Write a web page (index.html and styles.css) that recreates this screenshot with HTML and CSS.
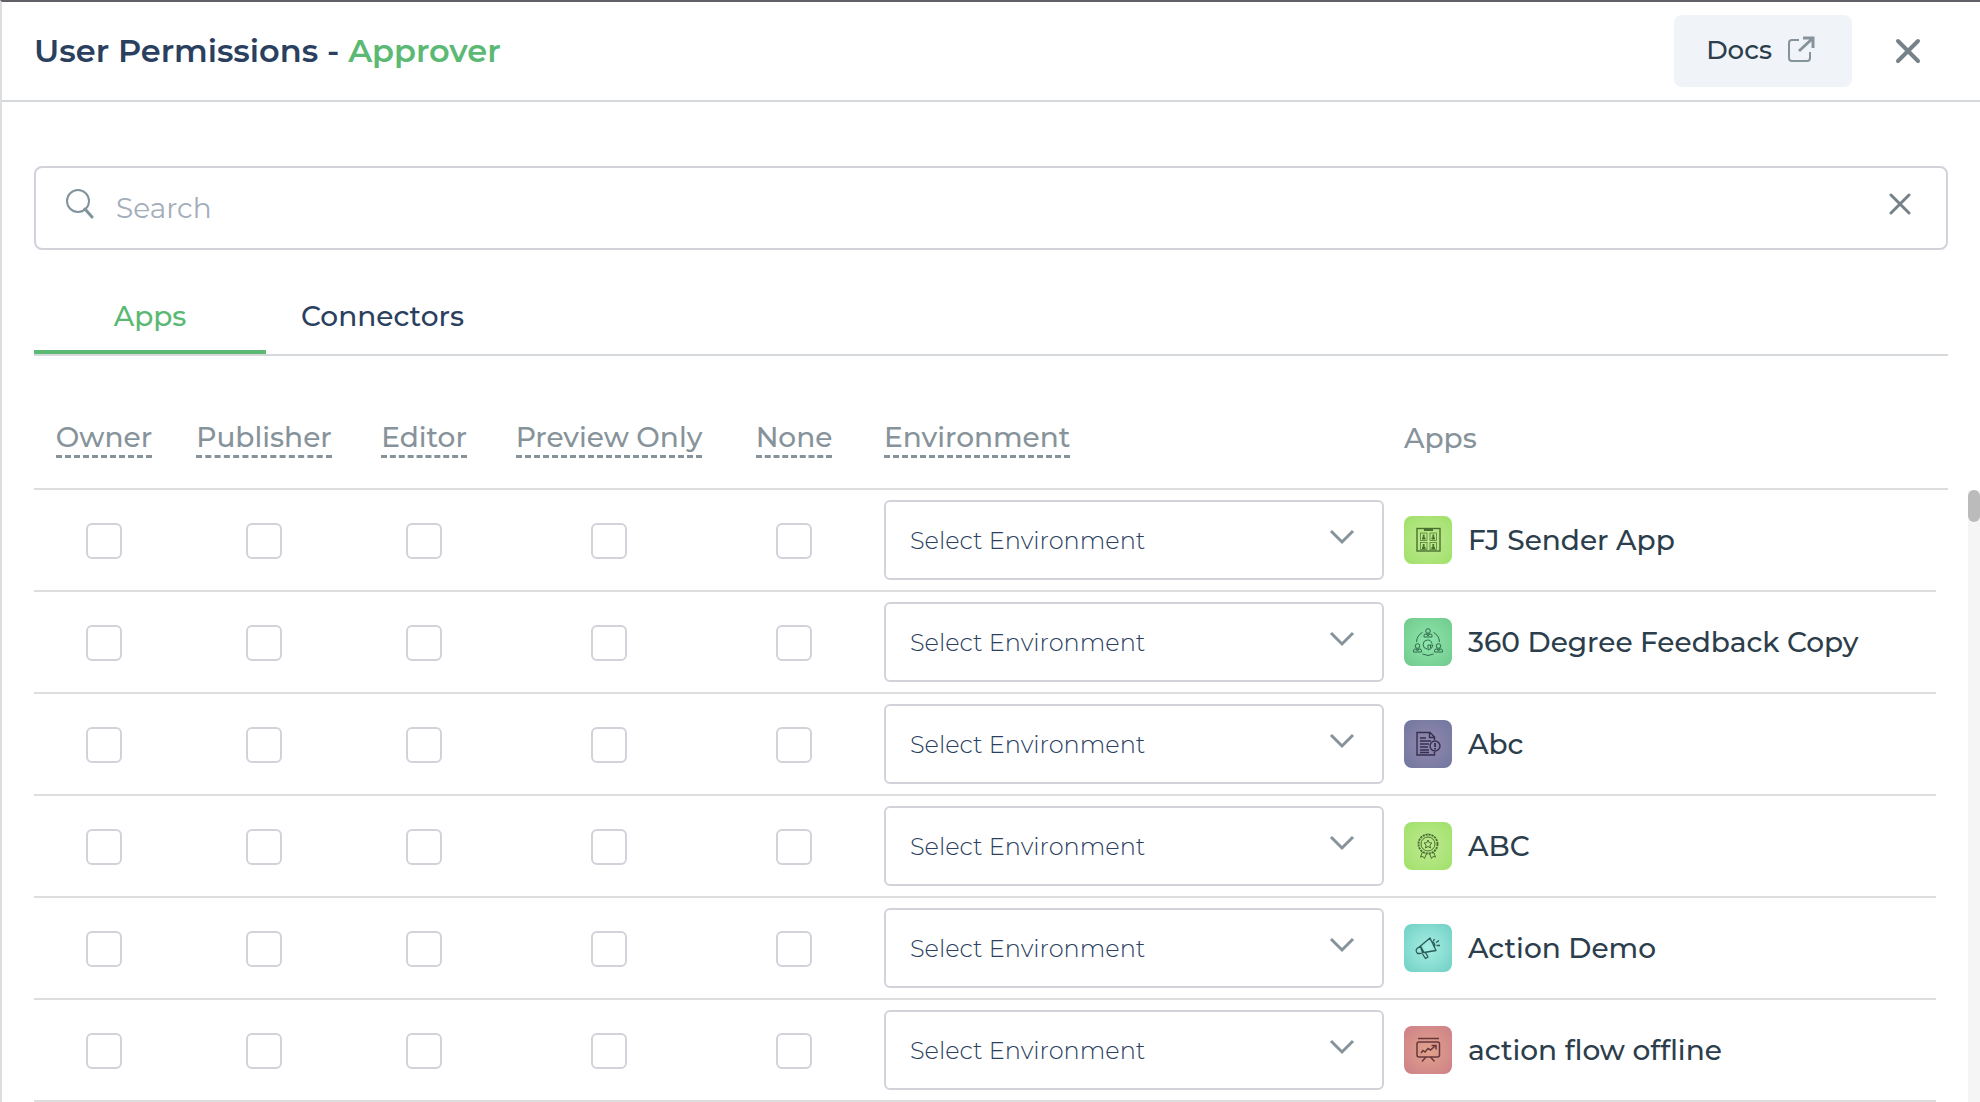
FILE: index.html
```html
<!DOCTYPE html>
<html lang="en">
<head>
<meta charset="utf-8">
<title>User Permissions</title>
<link rel="stylesheet" href="styles.css">
</head>
<body>
<main class="panel">
  <header class="panel-header">
    <h1 class="title">User Permissions - <span class="accent">Approver</span></h1>
    <a class="docs" href="#docs">Docs
      <svg width="28" height="28" viewBox="0 0 28 28" fill="none" stroke="#87939a" stroke-width="2"><path d="M12 4H5Q2 4 2 7V22Q2 25 5 25H20Q23 25 23 22V16"/><path d="M12 15L25 3M16 2H26V12" stroke-width="3"/></svg>
    </a>
    <button class="icon-button" type="button" aria-label="Close">
      <svg width="26" height="26" viewBox="0 0 26 26" fill="none" stroke="#75828a" stroke-width="4" stroke-linecap="round"><path d="M3 3L23 23M23 3L3 23"/></svg>
    </button>
  </header>

  <div class="search">
    <svg width="28" height="30" viewBox="0 0 28 30" fill="none" stroke="#80929a" stroke-width="2"><circle cx="12" cy="12" r="11"/><path d="M19 20L26 28" stroke-width="3" stroke-linecap="round"/></svg>
    <input class="search-input" type="text" placeholder="Search" aria-label="Search">
    <button class="icon-button" type="button" aria-label="Clear search">
      <svg width="22" height="22" viewBox="0 0 22 22" fill="none" stroke="#75828a" stroke-width="3" stroke-linecap="round"><path d="M2 2L20 20M20 2L2 20"/></svg>
    </button>
  </div>

  <nav class="tabs">
    <a class="tab tab-active" href="#apps">Apps</a>
    <a class="tab" href="#connectors">Connectors</a>
  </nav>

  <div class="list">
    <table class="table">
      <thead>
        <tr class="head-row">
          <th><span class="hint">Owner</span></th>
          <th><span class="hint">Publisher</span></th>
          <th><span class="hint">Editor</span></th>
          <th><span class="hint">Preview Only</span></th>
          <th><span class="hint">None</span></th>
          <th class="env"><span class="hint">Environment</span></th>
          <th class="app">Apps</th>
        </tr>
      </thead>
      <tbody>
        <tr class="row">
          <td><input class="check" type="checkbox" aria-label="Owner"></td>
          <td><input class="check" type="checkbox" aria-label="Publisher"></td>
          <td><input class="check" type="checkbox" aria-label="Editor"></td>
          <td><input class="check" type="checkbox" aria-label="Preview Only"></td>
          <td><input class="check" type="checkbox" aria-label="None"></td>
          <td class="env"><div class="select-box"><select class="select" aria-label="Environment"><option>Select Environment</option></select><svg class="chevron" width="26" height="16" viewBox="0 0 26 16"><path d="M2 2L13 13L24 2"/></svg></div></td>
          <td class="app"><svg class="app-icon lime" viewBox="0 0 48 48"><rect x="13" y="12.500" width="23" height="22.500" stroke-width="1.400"/><path d="M20 14H29" stroke-width="2"/><g stroke-width="0.700"><rect x="16.500" y="17" width="6.500" height="7.500"/><rect x="26" y="17" width="6.500" height="7.500"/><rect x="16.500" y="26.500" width="6.500" height="7"/><rect x="26" y="26.500" width="6.500" height="7"/></g><path stroke-width="1.800" d="M19.700 18.500V22.500M29.300 18.500V22.500M19.700 28V32M29.300 28V32M18 22.500H21.500M27.500 22.500H31M18 32H21.500M27.500 32H31"/></svg>FJ Sender App</td>
        </tr>
        <tr class="row">
          <td><input class="check" type="checkbox" aria-label="Owner"></td>
          <td><input class="check" type="checkbox" aria-label="Publisher"></td>
          <td><input class="check" type="checkbox" aria-label="Editor"></td>
          <td><input class="check" type="checkbox" aria-label="Preview Only"></td>
          <td><input class="check" type="checkbox" aria-label="None"></td>
          <td class="env"><div class="select-box"><select class="select" aria-label="Environment"><option>Select Environment</option></select><svg class="chevron" width="26" height="16" viewBox="0 0 26 16"><path d="M2 2L13 13L24 2"/></svg></div></td>
          <td class="app"><svg class="app-icon green" viewBox="0 0 48 48"><path d="M12.500 24Q13 17 18.500 14.500M35.500 24Q35 17 29.500 14.500M18.500 36Q24 39 29.500 36"/><circle cx="24" cy="13" r="2.300"/><path d="M20 19V17.500Q20 16 22 16H26Q28 16 28 17.500V19ZM22.500 16L24 18L25.500 16"/><circle cx="13.500" cy="28" r="2.300"/><path d="M9.500 34V32.500Q9.500 31 11.500 31H15.500Q17.500 31 17.500 32.500V34ZM12 31L13.500 33L15 31"/><circle cx="34.500" cy="28" r="2.300"/><path d="M30.500 34V32.500Q30.500 31 32.500 31H36.500Q38.500 31 38.500 32.500V34ZM33 31L34.500 33L36 31"/><path d="M23 31A4.500 4.500 0 1 1 28 25.500"/><path d="M24 27H29Q28.500 31 24 32ZM26.500 27V30"/></svg>360 Degree Feedback Copy</td>
        </tr>
        <tr class="row">
          <td><input class="check" type="checkbox" aria-label="Owner"></td>
          <td><input class="check" type="checkbox" aria-label="Publisher"></td>
          <td><input class="check" type="checkbox" aria-label="Editor"></td>
          <td><input class="check" type="checkbox" aria-label="Preview Only"></td>
          <td><input class="check" type="checkbox" aria-label="None"></td>
          <td class="env"><div class="select-box"><select class="select" aria-label="Environment"><option>Select Environment</option></select><svg class="chevron" width="26" height="16" viewBox="0 0 26 16"><path d="M2 2L13 13L24 2"/></svg></div></td>
          <td class="app"><svg class="app-icon violet" viewBox="0 0 48 48"><path stroke-width="1.400" d="M30.500 20V17L26 12.500H13V35H30.500V32M25.500 12.500V17.500H30.500M16 18H22M16 21H27M16 24H25M16 27H24M16 30H25M16 32.500H25"/><circle cx="31" cy="26" r="5" stroke-width="1.400"/><path stroke-width="1.800" d="M31 23V27M31 28V29.500"/></svg>Abc</td>
        </tr>
        <tr class="row">
          <td><input class="check" type="checkbox" aria-label="Owner"></td>
          <td><input class="check" type="checkbox" aria-label="Publisher"></td>
          <td><input class="check" type="checkbox" aria-label="Editor"></td>
          <td><input class="check" type="checkbox" aria-label="Preview Only"></td>
          <td><input class="check" type="checkbox" aria-label="None"></td>
          <td class="env"><div class="select-box"><select class="select" aria-label="Environment"><option>Select Environment</option></select><svg class="chevron" width="26" height="16" viewBox="0 0 26 16"><path d="M2 2L13 13L24 2"/></svg></div></td>
          <td class="app"><svg class="app-icon lime" viewBox="0 0 48 48"><circle cx="24" cy="22" r="9.500" stroke-width="1.800" stroke-dasharray="2.200 0.800"/><circle cx="24" cy="22" r="7"/><path d="M24 18L25.200 20.700L28 21L25.900 23L26.500 26L24 24.500L21.500 26L22.100 23L20 21L22.800 20.700Z"/><path d="M18.500 30L16.500 35L19 34.500L20.500 36.500L22.500 31.500M29.500 30L31.500 35L29 34.500L27.500 36.500L25.500 31.500"/></svg>ABC</td>
        </tr>
        <tr class="row">
          <td><input class="check" type="checkbox" aria-label="Owner"></td>
          <td><input class="check" type="checkbox" aria-label="Publisher"></td>
          <td><input class="check" type="checkbox" aria-label="Editor"></td>
          <td><input class="check" type="checkbox" aria-label="Preview Only"></td>
          <td><input class="check" type="checkbox" aria-label="None"></td>
          <td class="env"><div class="select-box"><select class="select" aria-label="Environment"><option>Select Environment</option></select><svg class="chevron" width="26" height="16" viewBox="0 0 26 16"><path d="M2 2L13 13L24 2"/></svg></div></td>
          <td class="app"><svg class="app-icon teal" viewBox="0 0 48 48"><path stroke-width="1.300" stroke-linejoin="round" d="M26 14L32 26.500L20 28.500L16.500 22ZM16.500 22L13 24.500Q11.500 26 12.500 28L13.500 29.500H16.500L20 28.500M16.500 22.500L18.500 28.500M18.500 30L21.500 34.500L24 33L21.500 28.500M28.500 18Q31.500 19 30.500 22.500"/><path stroke-width="1.300" d="M29 17.500L30.500 15M32 18.500L35 16.500M32.500 21.500H36"/></svg>Action Demo</td>
        </tr>
        <tr class="row">
          <td><input class="check" type="checkbox" aria-label="Owner"></td>
          <td><input class="check" type="checkbox" aria-label="Publisher"></td>
          <td><input class="check" type="checkbox" aria-label="Editor"></td>
          <td><input class="check" type="checkbox" aria-label="Preview Only"></td>
          <td><input class="check" type="checkbox" aria-label="None"></td>
          <td class="env"><div class="select-box"><select class="select" aria-label="Environment"><option>Select Environment</option></select><svg class="chevron" width="26" height="16" viewBox="0 0 26 16"><path d="M2 2L13 13L24 2"/></svg></div></td>
          <td class="app"><svg class="app-icon rose" viewBox="0 0 48 48"><g stroke-width="1.500"><path d="M14 12.500H35"/><rect x="13" y="16" width="22.500" height="15" rx="2"/><path d="M17 27L19 24.500L21 26L24 22.500L26.500 24L31.500 19.500M27.500 19.500H32V23.500M22 31L18 35.500M26.500 31L30.500 35.500"/></g></svg>action flow offline</td>
        </tr>
      </tbody>
    </table>
    <div class="rail"><div class="thumb"></div></div>
  </div>
</main>
</body>
</html>
```
FILE: styles.css
```css
* { box-sizing: border-box; }

body {
  margin: 0;
  background: #fff;
  color: #2c3e4c;
  font: 500 28px/36px Montserrat, Inter, "Open Sans", sans-serif;
}

.panel {
  min-height: 100vh;
  border-top: 2px solid #625f66;
  border-left: 2px solid #ddd;
}

.panel-header {
  display: flex;
  align-items: center;
  height: 100px;
  padding: 0 59px 0 32px;
  border-bottom: 2px solid #d5d9dc;
}

.title {
  flex: 1;
  margin: 0;
  color: #2b3f5f;
  font-size: 32px;
  font-weight: 600;
}

.accent { color: #5bb974; }

.docs {
  display: flex;
  align-items: center;
  gap: 15px;
  height: 72px;
  margin-right: 43px;
  padding: 0 37px 2px 32px;
  border-radius: 8px;
  background: #f0f3f8;
  color: inherit;
  font-size: 26px;
  text-decoration: none;
}

.icon-button {
  display: flex;
  padding: 0;
  border: 0;
  background: none;
}

.search {
  display: flex;
  align-items: center;
  gap: 22px;
  height: 84px;
  margin: 64px 32px 0;
  padding: 0 35px 8px 30px;
  border: 2px solid #d2d2da;
  border-radius: 8px;
}

.search-input {
  flex: 1;
  min-width: 0;
  padding: 8px 0 0;
  border: 0;
  outline: 0;
  background: none;
  font: inherit;
  font-weight: 400;
}

.search-input::placeholder { color: #a4adba; }

.tabs {
  display: flex;
  margin: 32px 32px 0;
  border-bottom: 2px solid #d5d9dc;
}

.tab {
  height: 72px;
  padding: 16px 35px 0;
  color: #2b3f5f;
  text-align: center;
  text-decoration: none;
}

.tab-active {
  width: 232px;
  border-bottom: 4px solid #5bb974;
  color: #5bb974;
}

.list {
  display: flex;
  align-items: stretch;
  padding-left: 32px;
}

.table {
  display: block;
  flex: 1;
}

.table thead,
.table tbody { display: block; }

.table tbody { margin-right: 12px; }

.head-row,
.row {
  display: grid;
  grid-template-columns: 140px 180px 140px 230px 140px 520px 1fr;
  align-items: center;
  border-bottom: 2px solid #ddd;
}

.head-row {
  height: 134px;
  padding-top: 32px;
}

.row { height: 102px; }

.table th,
.table td {
  display: flex;
  justify-content: center;
  padding: 0;
  color: #87939a;
  font-weight: 500;
}

.hint { border-bottom: 3px dashed #87939a; }

.table .env {
  justify-content: flex-start;
  padding-left: 20px;
}

.table .app {
  justify-content: flex-start;
  align-items: center;
  gap: 16px;
  padding-left: 20px;
  white-space: nowrap;
}

.table td.app { color: #2c3e4c; }

.check {
  width: 36px;
  height: 36px;
  margin: 2px 0 0;
  border: 2px solid #d2d2da;
  border-radius: 6px;
  background: #fff;
  appearance: none;
}

.select-box {
  position: relative;
  width: 100%;
}

.select {
  width: 100%;
  height: 80px;
  padding: 2px 24px 0;
  border: 2px solid #d2d2da;
  border-radius: 6px;
  background: #fff;
  color: #2b3f5f;
  font: inherit;
  font-size: 24px;
  font-weight: 300;
  appearance: none;
}

.chevron {
  position: absolute;
  top: 29px;
  right: 29px;
  fill: none;
  stroke: #87939a;
  stroke-width: 3;
  pointer-events: none;
}

.app-icon {
  width: 48px;
  height: 48px;
  border-radius: 8px;
  fill: none;
  stroke-width: 1;
}

.lime { background: radial-gradient(#c0ea90, #9fe06a); stroke: #48702f; }
.green { background: radial-gradient(#8fe6ac, #70c98c); stroke: #2f6b4a; }
.violet { background: radial-gradient(#9488ae, #70779f); stroke: #343150; }
.teal { background: radial-gradient(#a6eee2, #70cfc4); stroke: #2c5b5a; }
.rose { background: radial-gradient(#e2a38c, #cc7f88); stroke: #66383c; }

.rail {
  width: 12px;
  margin: 134px 0 0 20px;
  background: #f5f5f5;
}

.thumb {
  height: 32px;
  border-radius: 6px;
  background: #bbb;
}
```
